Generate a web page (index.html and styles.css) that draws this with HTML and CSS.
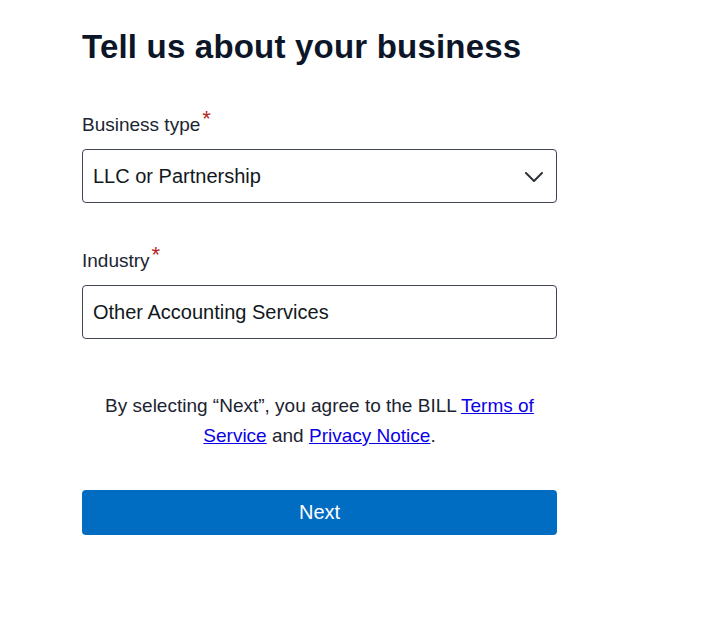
FILE: index.html
```html
<!DOCTYPE html>
<html lang="en">
<head>
<meta charset="utf-8">
<title>Tell us about your business</title>
<link rel="stylesheet" href="styles.css">
</head>
<body>
<main class="page">
  <h1 class="title">Tell us about your business</h1>
  <div class="field">
    <label class="label">Business type<span class="req">*</span></label>
    <div class="control select">
      <span class="value">LLC or Partnership</span>
      <svg class="chevron" width="18" height="10" viewBox="0 0 18 10" aria-hidden="true"><path d="M1 1 L9 9 L17 1" fill="none" stroke="#2e333b" stroke-width="2" stroke-linecap="round" stroke-linejoin="round"/></svg>
    </div>
  </div>
  <div class="field field-second">
    <label class="label">Industry<span class="req">*</span></label>
    <div class="control">
      <span class="value">Other Accounting Services</span>
    </div>
  </div>
  <p class="terms">By selecting “Next”, you agree to the BILL <a href="#">Terms of Service</a> and <a href="#">Privacy Notice</a>.</p>
  <button class="next" type="button">Next</button>
</main>
</body>
</html>
```
FILE: styles.css
```css
html, body {
  margin: 0;
  padding: 0;
  background: #ffffff;
}
body {
  font-family: "Liberation Sans", Arial, Helvetica, sans-serif;
  color: #1c2431;
}
.page {
  width: 475px;
  margin-left: 82px;
  display: flex;
  flex-direction: column;
}
.title {
  margin: 27px 0 0 0;
  font-size: 33px;
  line-height: 40px;
  font-weight: 700;
  color: #0c1628;
  letter-spacing: 0.2px;
}
.field {
  margin-top: 45px;
  display: flex;
  flex-direction: column;
  gap: 12px;
}
.field-second {
  margin-top: 45px;
}
.label {
  font-size: 19px;
  line-height: 24px;
  color: #1c2431;
}
.req {
  color: #b3261e;
  font-size: 22px;
  position: relative;
  top: -5px;
  margin-left: 2px;
}
.control {
  box-sizing: border-box;
  height: 54px;
  border: 1px solid #3f4552;
  border-radius: 4px;
  padding: 0 13px 0 10px;
  display: flex;
  align-items: center;
  justify-content: space-between;
  font-size: 20px;
  color: #111820;
}
.chevron {
  display: block;
  margin-top: 1px;
}
.terms {
  margin: 52px 0 0 0;
  padding: 0 8px;
  font-size: 19px;
  line-height: 30px;
  text-align: center;
  color: #1c2431;
}
.terms a {
  color: #0a00e8;
  text-decoration: underline;
}
.next {
  margin-top: 39px;
  height: 45px;
  border: none;
  border-radius: 4px;
  background: #016dc2;
  color: #ffffff;
  font-family: "Liberation Sans", Arial, Helvetica, sans-serif;
  font-size: 20px;
  cursor: pointer;
}
```
